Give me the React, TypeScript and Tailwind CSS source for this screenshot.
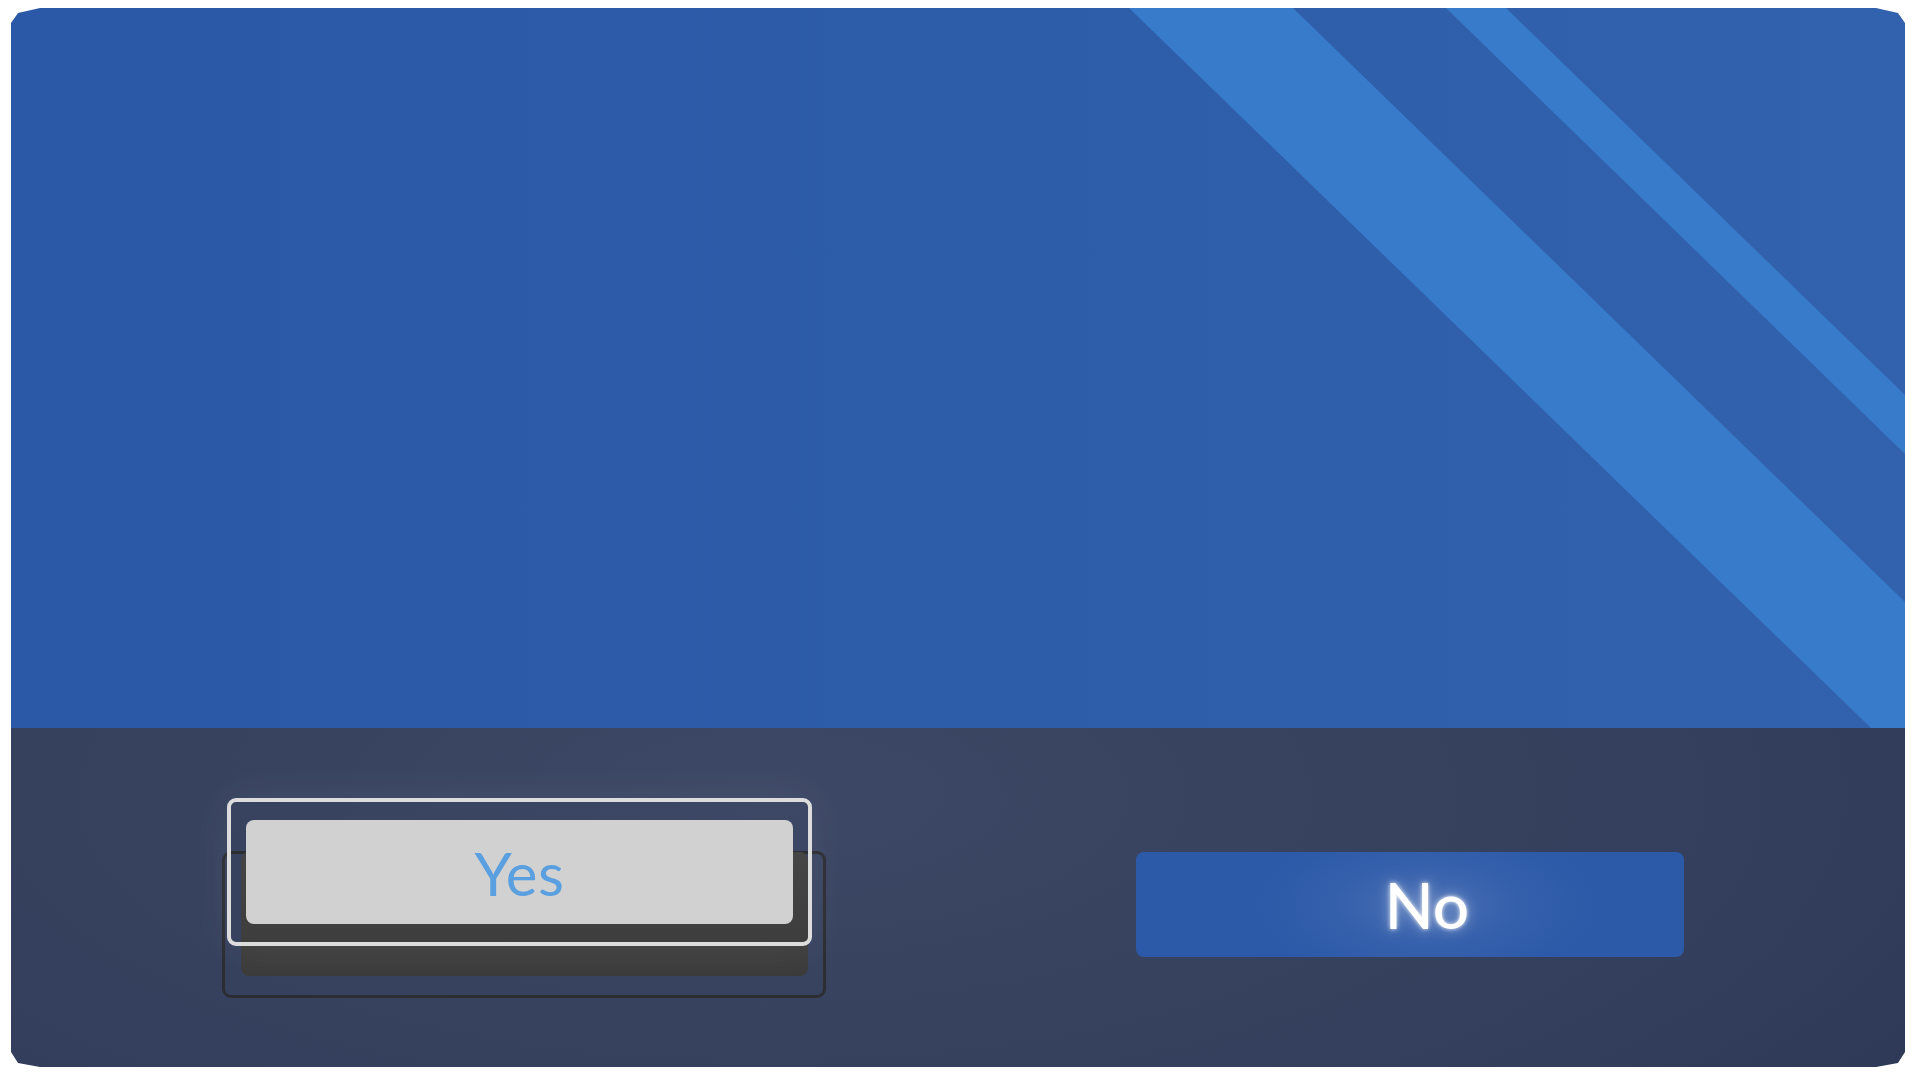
import React from 'react';

const FONT = { fontFamily: 'Lato, "Open Sans", sans-serif' };

const Stripes: React.FC = () => (
  <svg className="absolute inset-0 pointer-events-none" width="1894" height="720" viewBox="0 0 1894 720">
    <polygon points="1118,0 1282,0 1894,594 1894,720 1860,720 1118,0" fill="#387bcb" />
    <polygon points="1435,0 1495,0 1894,387 1894,446" fill="#387bcb" />
  </svg>
);

const YesButton: React.FC = () => (
  <div className="relative w-[604px] h-[147px] shrink-0">
    {/* base outline */}
    <div className="absolute inset-0 rounded-[9px] border-[3px] border-[#2a2a2a]/85" />
    {/* shadow block under the lifted face */}
    <div className="absolute left-[19px] top-[1px] w-[567px] h-[124px] rounded-[8px] bg-gradient-to-b from-[#454545] to-[#3b3b3b]" />
    {/* focus ring + face */}
    <div className="absolute left-[5px] top-[-53px] w-[585px] h-[148px] rounded-[9px] border-[4px] border-[#dcdcdc] shadow-[0_0_45px_rgba(255,255,255,0.07)]">
      <button
        className="absolute left-[15px] top-[18px] w-[547px] h-[104px] rounded-[8px] bg-[#d1d1d1] flex items-center justify-center"
        style={FONT}
      >
        <span className="text-[60px] leading-none text-[#5a9fdf] tracking-[0.5px] mt-[2px]">Yes</span>
      </button>
    </div>
  </div>
);

const NoButton: React.FC = () => (
  <button
    className="mt-[1px] ml-[310px] w-[548px] h-[105px] rounded-[8px] shrink-0 flex items-center justify-center bg-[radial-gradient(ellipse_170px_80px_at_53%_50%,#4a70b5_0%,#345fab_55%,#2c5aa8_100%)]"
    style={FONT}
  >
    <span className="pl-[34px] text-[64px] leading-none font-medium text-white [text-shadow:0_0_4px_rgba(255,255,255,0.9),0_0_14px_rgba(255,255,255,0.5)]">
      No
    </span>
  </button>
);

const App: React.FC = () => {
  return (
    <div className="w-full h-screen bg-white pt-[8px] pl-[11px]">
      <div className="w-[1894px] h-[1059px] flex flex-col overflow-hidden [clip-path:polygon(0_15px,7px_5px,29px_0,calc(100%_-_29px)_0,calc(100%_-_7px)_5px,100%_15px,100%_calc(100%_-_15px),calc(100%_-_7px)_calc(100%_-_4px),calc(100%_-_29px)_100%,29px_100%,7px_calc(100%_-_4px),0_calc(100%_-_15px))]">
        {/* top panel */}
        <div className="relative h-[720px] shrink-0 bg-gradient-to-r from-[#2b58a7] via-[#2d5ca9] to-[#3262ae]">
          <Stripes />
        </div>

        {/* bottom dialog bar */}
        <div className="flex-1 flex items-start pt-[123px] pl-[211px] bg-[radial-gradient(ellipse_1300px_500px_at_40%_20%,#3d4866_0%,#37425f_45%,#343f5d_75%,#2f3a59_100%)]">
          <YesButton />
          <NoButton />
        </div>
      </div>
    </div>
  );
};

export default App;
